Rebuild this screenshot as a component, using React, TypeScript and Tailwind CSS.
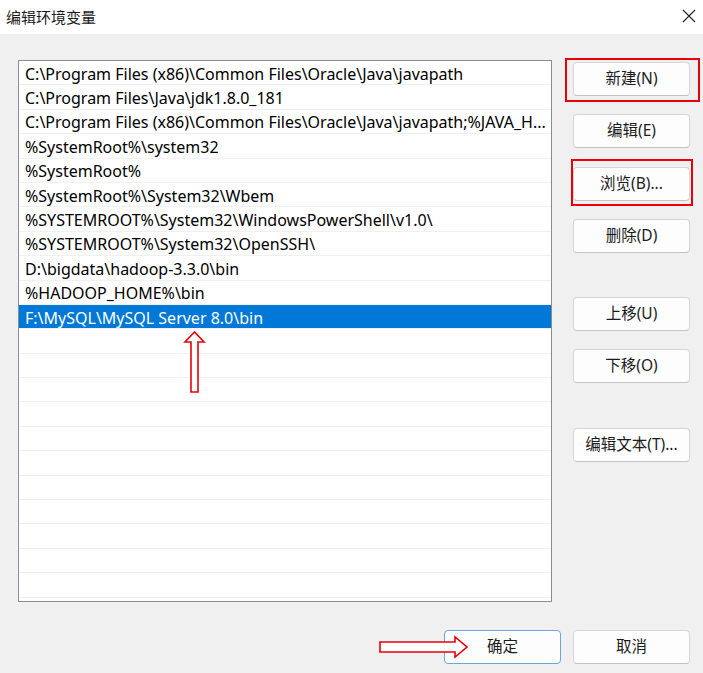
import React from "react";

const font = { fontFamily: '"Noto Sans", "Noto Sans CJK SC", sans-serif' };

const paths = [
  "C:\\Program Files (x86)\\Common Files\\Oracle\\Java\\javapath",
  "C:\\Program Files\\Java\\jdk1.8.0_181",
  "C:\\Program Files (x86)\\Common Files\\Oracle\\Java\\javapath;%JAVA_H...",
  "%SystemRoot%\\system32",
  "%SystemRoot%",
  "%SystemRoot%\\System32\\Wbem",
  "%SYSTEMROOT%\\System32\\WindowsPowerShell\\v1.0\\",
  "%SYSTEMROOT%\\System32\\OpenSSH\\",
  "D:\\bigdata\\hadoop-3.3.0\\bin",
  "%HADOOP_HOME%\\bin",
  "F:\\MySQL\\MySQL Server 8.0\\bin",
];

const selected = 10;
const rows = [...paths, ...Array(13).fill("")];

const Btn = ({ label, className = "" }: { label: string; className?: string }) => (
  <button
    className={
      "relative h-[34px] w-[117px] rounded-[4px] border border-[#d5d5d5] border-b-[#c4c4c4] bg-[#fdfdfd] text-[15.5px] text-[#1b1b1b] " +
      className
    }
  >
    {label}
  </button>
);

export default function App() {
  return (
    <div className="relative flex h-[673px] w-[703px] flex-col overflow-hidden bg-[#f0f0f0]" style={font}>
      {/* title bar */}
      <div className="flex h-[34px] items-center justify-between bg-white pl-[6px] pr-[7px]">
        <span className="text-[15px] text-[#1a1a1a]">编辑环境变量</span>
        <svg width="14" height="14" viewBox="0 0 14 14" className="-mt-[2px]">
          <path d="M1 1 L13 13 M13 1 L1 13" stroke="#222" strokeWidth="1.1" fill="none" />
        </svg>
      </div>

      <div className="flex pl-[18px] pt-[26px]">
        {/* list */}
        <div className="h-[542px] w-[534px] overflow-hidden border border-[#8a8e94] bg-white">
          {rows.map((p, i) => (
            <div
              key={i}
              className={
                "flex h-[24.4px] items-center overflow-hidden whitespace-nowrap border-b border-[#f0f0f0] pl-[6px] pt-[2px] text-[16px] " +
                (i === selected ? "bg-[#0078d7] text-white" : "text-black")
              }
            >
              {p}
            </div>
          ))}
        </div>

        {/* buttons */}
        <div className="ml-[21px] flex flex-col pt-[2px]">
          <div className="relative">
            <Btn label="新建(N)" />
            <div className="absolute -left-[8px] -right-[10px] -top-[4px] -bottom-[6px] border-2 border-[#e8000b]" />
          </div>
          <Btn label="编辑(E)" className="mt-[18px]" />
          <div className="relative mt-[19px]">
            <Btn label="浏览(B)..." />
            <div className="absolute -left-[2px] -right-[3px] -top-[8px] -bottom-[5px] border-2 border-[#e8000b]" />
          </div>
          <Btn label="删除(D)" className="mt-[18px]" />
          <Btn label="上移(U)" className="mt-[44px]" />
          <Btn label="下移(O)" className="mt-[18px]" />
          <Btn label="编辑文本(T)..." className="mt-[45px]" />
        </div>
      </div>

      {/* bottom buttons */}
      <div className="flex justify-end gap-[12px] pr-[13px] pt-[28px]">
        <Btn label="确定" className="!border-[#6ea6dc]" />
        <Btn label="取消" />
      </div>

      {/* annotation arrows */}
      <svg className="absolute left-0 top-0" width="703" height="673" style={{ pointerEvents: "none" }}>
        <polygon
          points="194.5,332 185,342 191,342 191,392 198,392 198,342 204,342"
          fill="white"
          stroke="#e8000b"
          strokeWidth="1.6"
        />
        <polygon
          points="380,642 455,642 455,637 467,647 455,657 455,652 380,652"
          fill="white"
          stroke="#e8000b"
          strokeWidth="1.6"
        />
      </svg>
    </div>
  );
}
